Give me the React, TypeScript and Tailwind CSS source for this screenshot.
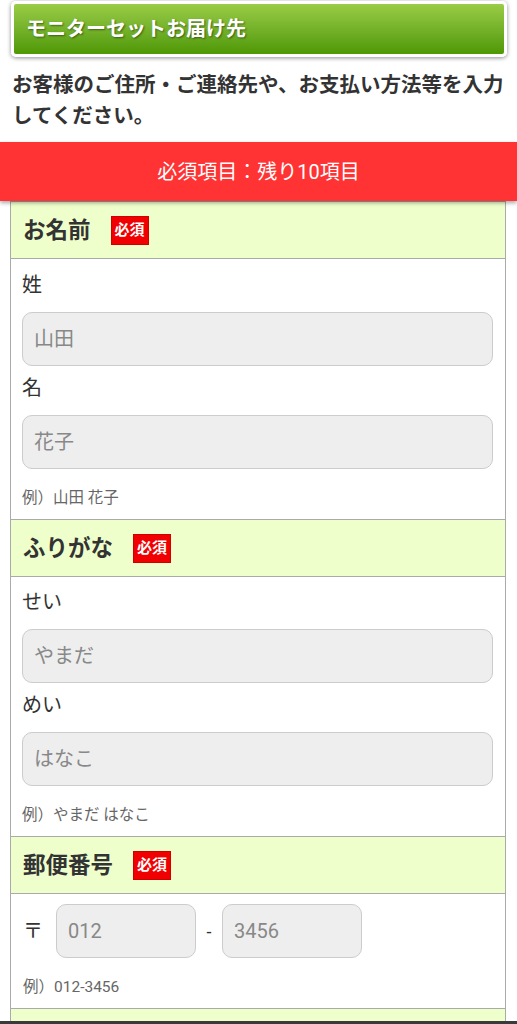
import React from 'react';

const font = { fontFamily: 'Roboto, "Noto Sans CJK JP", sans-serif' };

const Badge: React.FC = () => (
  <span className="ml-[20px] inline-flex h-[29px] w-[38px] items-center justify-center border border-[#d00000] bg-[#f00000] text-[15px] font-bold leading-none text-white">
    必須
  </span>
);

const SectionHeader: React.FC<{ title: string }> = ({ title }) => (
  <div className="flex h-[57px] items-center border-b border-[#aaaaaa] bg-[#efffcc] pl-[12px]">
    <h3 className="text-[22.5px] font-bold leading-none text-[#333333]">{title}</h3>
    <Badge />
  </div>
);

const TextField: React.FC<{ label: string; placeholder: string; first?: boolean }> = ({ label, placeholder, first }) => (
  <div className={first ? '' : 'mt-[7px]'}>
    <label className="mb-[12px] block text-[20px] leading-[30px] text-[#333333]">{label}</label>
    <input
      type="text"
      placeholder={placeholder}
      className="block h-[54px] w-full rounded-[10px] border border-[#cccccc] bg-[#eeeeee] px-[11px] text-[20px] text-[#333333] placeholder:text-[#888888] focus:outline-none"
    />
  </div>
);

const Example: React.FC<{ text: string }> = ({ text }) => (
  <p className="mt-[19px] text-[15.5px] leading-[20px] text-[#666666]">例）{text}</p>
);

const App: React.FC = () => {
  return (
    <div className="min-h-screen bg-white pb-10" style={font}>
      <div className="ml-[11px] mr-[10px] pt-[1px]">
        <div className="rounded-[5px] border-[3px] border-white shadow-[0_1px_4px_rgba(0,0,0,0.45)]">
          <div className="flex h-[50px] items-center rounded-[2px] bg-gradient-to-b from-[#9acc45] to-[#4e9800] pl-[12px]">
            <h2 className="text-[20px] font-bold text-white [text-shadow:1px_1px_2px_rgba(0,0,0,0.45)]">
              モニターセットお届け先
            </h2>
          </div>
        </div>
      </div>

      <p className="mt-[13px] px-[12px] text-[20.5px] font-bold leading-[31px] text-[#333333]">
        お客様のご住所・ご連絡先や、お支払い方法等を入力してください。
      </p>

      <div className="relative z-10 mt-[10px] flex h-[59px] items-center justify-center bg-[#ff3333] shadow-[0_2px_4px_rgba(0,0,0,0.35)]">
        <span className="text-[20px] text-white">必須項目：残り10項目</span>
      </div>

      <form className="ml-[10px] mr-[11px] border-x border-t border-[#aaaaaa]">
        <section>
          <SectionHeader title="お名前" />
          <div className="border-b border-[#aaaaaa] pb-[11px] pl-[11px] pr-[12px] pt-[11px]">
            <TextField label="姓" placeholder="山田" first />
            <TextField label="名" placeholder="花子" />
            <Example text="山田 花子" />
          </div>
        </section>

        <section>
          <SectionHeader title="ふりがな" />
          <div className="border-b border-[#aaaaaa] pb-[11px] pl-[11px] pr-[12px] pt-[10px]">
            <TextField label="せい" placeholder="やまだ" first />
            <TextField label="めい" placeholder="はなこ" />
            <Example text="やまだ はなこ" />
          </div>
        </section>

        <section>
          <SectionHeader title="郵便番号" />
          <div className="border-b border-[#aaaaaa] pb-[11px] pl-[12px] pr-[12px] pt-[10px]">
            <div className="flex items-center">
              <span className="w-[33px] text-[20px] text-[#333333]">〒</span>
              <input
                type="text"
                placeholder="012"
                className="h-[54px] w-[140px] rounded-[10px] border border-[#cccccc] bg-[#eeeeee] px-[11px] text-[20px] placeholder:text-[#888888] focus:outline-none"
              />
              <span className="w-[26px] text-center text-[18px] text-[#333333]">-</span>
              <input
                type="text"
                placeholder="3456"
                className="h-[54px] w-[140px] rounded-[10px] border border-[#cccccc] bg-[#eeeeee] px-[11px] text-[20px] placeholder:text-[#888888] focus:outline-none"
              />
            </div>
            <Example text="012-3456" />
          </div>
        </section>

        <section>
          <div className="h-[57px] border-b border-[#aaaaaa] bg-[#efffcc]" />
        </section>
      </form>

      <div className="fixed inset-x-0 bottom-0 h-[3px] bg-[#3a3a3a]" />
    </div>
  );
};

export default App;
